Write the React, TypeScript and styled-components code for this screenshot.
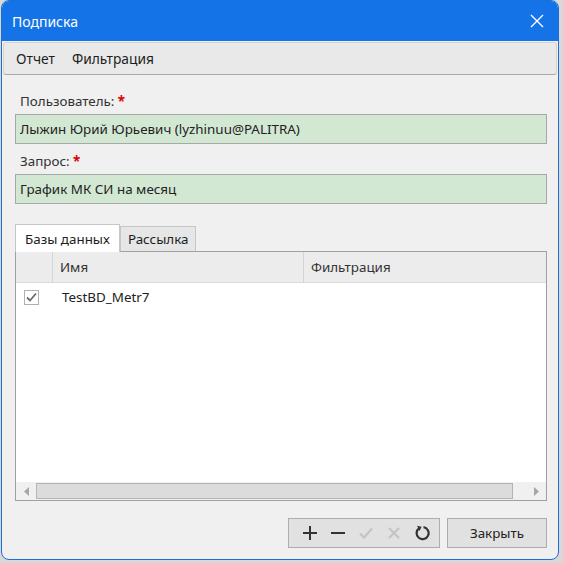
import styled, { createGlobalStyle } from "styled-components";

const GlobalStyle = createGlobalStyle`
  html, body {
    margin: 0;
    padding: 0;
    background: #d8d8d8;
  }
  body {
    font-family: "Noto Sans", "Open Sans", sans-serif;
    font-size: 13.4px;
    color: #1e1e1e;
  }
`;

const Window = styled.div`
  box-sizing: border-box;
  margin-left: 1px;
  width: 558px;
  height: 560px;
  background: #f0f0f0;
  border: 1px solid #1a6fdc;
  border-radius: 8px;
  overflow: hidden;
  display: flex;
  flex-direction: column;
`;

const TitleBar = styled.div`
  height: 40px;
  flex: none;
  background: #1473e6;
  color: #fff;
  display: flex;
  align-items: center;
  justify-content: space-between;
  padding: 0 14px 0 10px;
  font-size: 14px;
`;

const MenuBar = styled.div`
  margin: 1px 1px 0 1px;
  height: 33px;
  flex: none;
  box-sizing: border-box;
  background: #e9e9e9;
  border: 1px solid #d4d4d4;
  border-bottom-color: #a9a9a9;
  border-radius: 3px;
  display: flex;
  align-items: center;
  gap: 17px;
  padding-left: 12px;
  font-size: 13.8px;
`;

const Body = styled.div`
  flex: 1;
  display: flex;
  flex-direction: column;
  padding: 0 11px 12px 13px;
`;

const Label = styled.div<{ $top: number }>`
  margin-top: ${(p) => p.$top}px;
  height: 23px;
  line-height: 23px;
  padding-left: 5px;
  color: #333;
  span {
    color: #e00000;
    font-weight: bold;
  }
`;

const Input = styled.div`
  box-sizing: border-box;
  height: 30px;
  margin-top: 1px;
  background: #d3e8d3;
  border: 1px solid #a8a8a8;
  display: flex;
  align-items: center;
  padding-left: 4px;
  color: #222;
`;

const Tabs = styled.div`
  margin-top: 20px;
  height: 27px;
  display: flex;
  align-items: flex-end;
`;

const Tab = styled.div<{ $active?: boolean }>`
  box-sizing: border-box;
  height: ${(p) => (p.$active ? 28 : 25)}px;
  padding: 0 ${(p) => (p.$active ? 9 : 7)}px;
  display: flex;
  align-items: center;
  background: ${(p) => (p.$active ? "#fff" : "#e6e6e6")};
  border: 1px solid #c6c6c6;
  border-bottom: none;
  margin-bottom: ${(p) => (p.$active ? -1 : 0)}px;
  position: relative;
  z-index: ${(p) => (p.$active ? 1 : 0)};
`;

const Panel = styled.div`
  box-sizing: border-box;
  height: 250px;
  background: #fff;
  border: 1px solid #a0a0a0;
  display: flex;
  flex-direction: column;
`;

const HeaderRow = styled.div`
  height: 30px;
  flex: none;
  display: grid;
  grid-template-columns: 37px 251px 1fr;
  background: #ececec;
  border-bottom: 1px solid #dadada;
`;

const HeaderCell = styled.div`
  display: flex;
  align-items: center;
  padding-left: 7px;
  border-right: 1px solid #d4d4d4;
  color: #333;
  &:last-child {
    border-right: none;
  }
`;

const DataRow = styled.div`
  height: 28px;
  display: grid;
  grid-template-columns: 37px 251px 1fr;
  align-items: center;
`;

const Check = styled.div`
  box-sizing: border-box;
  width: 15px;
  height: 15px;
  margin-left: 8px;
  border: 1px solid #b0b0b0;
  background: #fff;
  display: flex;
  align-items: center;
  justify-content: center;
`;

const Cell = styled.div`
  padding-left: 9px;
  color: #222;
`;

const Spacer = styled.div`
  flex: 1;
`;

const ScrollBar = styled.div`
  height: 18px;
  flex: none;
  background: #f0f0f0;
  display: flex;
  align-items: center;
`;

const Arrow = styled.div`
  width: 20px;
  display: flex;
  justify-content: center;
`;

const Thumb = styled.div`
  width: 477px;
  box-sizing: border-box;
  height: 16px;
  background: #dcdcdc;
  border: 1px solid #b4b4b4;
`;

const Footer = styled.div`
  margin-top: 17px;
  display: flex;
  justify-content: flex-end;
  gap: 7px;
`;

const Group = styled.div`
  box-sizing: border-box;
  width: 152px;
  height: 30px;
  display: flex;
  align-items: center;
  padding-left: 7px;
  background: #e1e1e1;
  border: 1px solid #adadad;
`;

const IconBtn = styled.div`
  width: 28px;
  height: 22px;
  display: flex;
  align-items: center;
  justify-content: center;
`;

const Button = styled.div`
  box-sizing: border-box;
  width: 100px;
  height: 30px;
  display: flex;
  align-items: center;
  justify-content: center;
  background: #e1e1e1;
  border: 1px solid #adadad;
  color: #222;
`;

const App = () => {
  return (
    <>
      <GlobalStyle />
      <Window>
        <TitleBar>
          <div>Подписка</div>
          <svg width="14" height="14" viewBox="0 0 14 14">
            <path d="M1 1 L13 13 M13 1 L1 13" stroke="#fff" strokeWidth="1.4" />
          </svg>
        </TitleBar>
        <MenuBar>
          <div>Отчет</div>
          <div>Фильтрация</div>
        </MenuBar>
        <Body>
          <Label $top={15}>
            Пользователь: <span>*</span>
          </Label>
          <Input>Лыжин Юрий Юрьевич (lyzhinuu@PALITRA)</Input>
          <Label $top={6}>
            Запрос: <span>*</span>
          </Label>
          <Input>График МК СИ на месяц</Input>
          <Tabs>
            <Tab $active>Базы данных</Tab>
            <Tab>Рассылка</Tab>
          </Tabs>
          <Panel>
            <HeaderRow>
              <HeaderCell />
              <HeaderCell>Имя</HeaderCell>
              <HeaderCell>Фильтрация</HeaderCell>
            </HeaderRow>
            <DataRow>
              <div>
                <Check>
                  <svg width="11" height="10" viewBox="0 0 11 10">
                    <path d="M1 5.5 L4 8.5 L10 1.5" fill="none" stroke="#6b6b6b" strokeWidth="1.8" />
                  </svg>
                </Check>
              </div>
              <Cell>TestBD_Metr7</Cell>
              <div />
            </DataRow>
            <Spacer />
            <ScrollBar>
              <Arrow>
                <svg width="5" height="9" viewBox="0 0 5 9">
                  <path d="M5 0 L0 4.5 L5 9 Z" fill="#a6a6a6" />
                </svg>
              </Arrow>
              <Thumb />
              <Spacer />
              <Arrow>
                <svg width="5" height="9" viewBox="0 0 5 9">
                  <path d="M0 0 L5 4.5 L0 9 Z" fill="#a6a6a6" />
                </svg>
              </Arrow>
            </ScrollBar>
          </Panel>
          <Footer>
            <Group>
              <IconBtn>
                <svg width="14" height="14" viewBox="0 0 14 14">
                  <path d="M7 0 V14 M0 7 H14" stroke="#333" strokeWidth="2" />
                </svg>
              </IconBtn>
              <IconBtn>
                <svg width="14" height="14" viewBox="0 0 14 14">
                  <path d="M0 7 H14" stroke="#333" strokeWidth="2" />
                </svg>
              </IconBtn>
              <IconBtn>
                <svg width="14" height="12" viewBox="0 0 14 12">
                  <path d="M1 6.5 L5 10.5 L13 1.5" fill="none" stroke="#c4c4c4" strokeWidth="2.2" />
                </svg>
              </IconBtn>
              <IconBtn>
                <svg width="12" height="12" viewBox="0 0 12 12">
                  <path d="M1 1 L11 11 M11 1 L1 11" stroke="#c4c4c4" strokeWidth="2.2" />
                </svg>
              </IconBtn>
              <IconBtn>
                <svg width="16" height="16" viewBox="0 0 16 16">
                  <path
                    d="M5.2 3.2 A6 6 0 1 0 9.5 2.2"
                    fill="none"
                    stroke="#333"
                    strokeWidth="2.2"
                  />
                  <path d="M3 0.8 L7.6 1.8 L5.6 6 Z" fill="#333" />
                </svg>
              </IconBtn>
            </Group>
            <Button>Закрыть</Button>
          </Footer>
        </Body>
      </Window>
    </>
  );
};

export default App;
